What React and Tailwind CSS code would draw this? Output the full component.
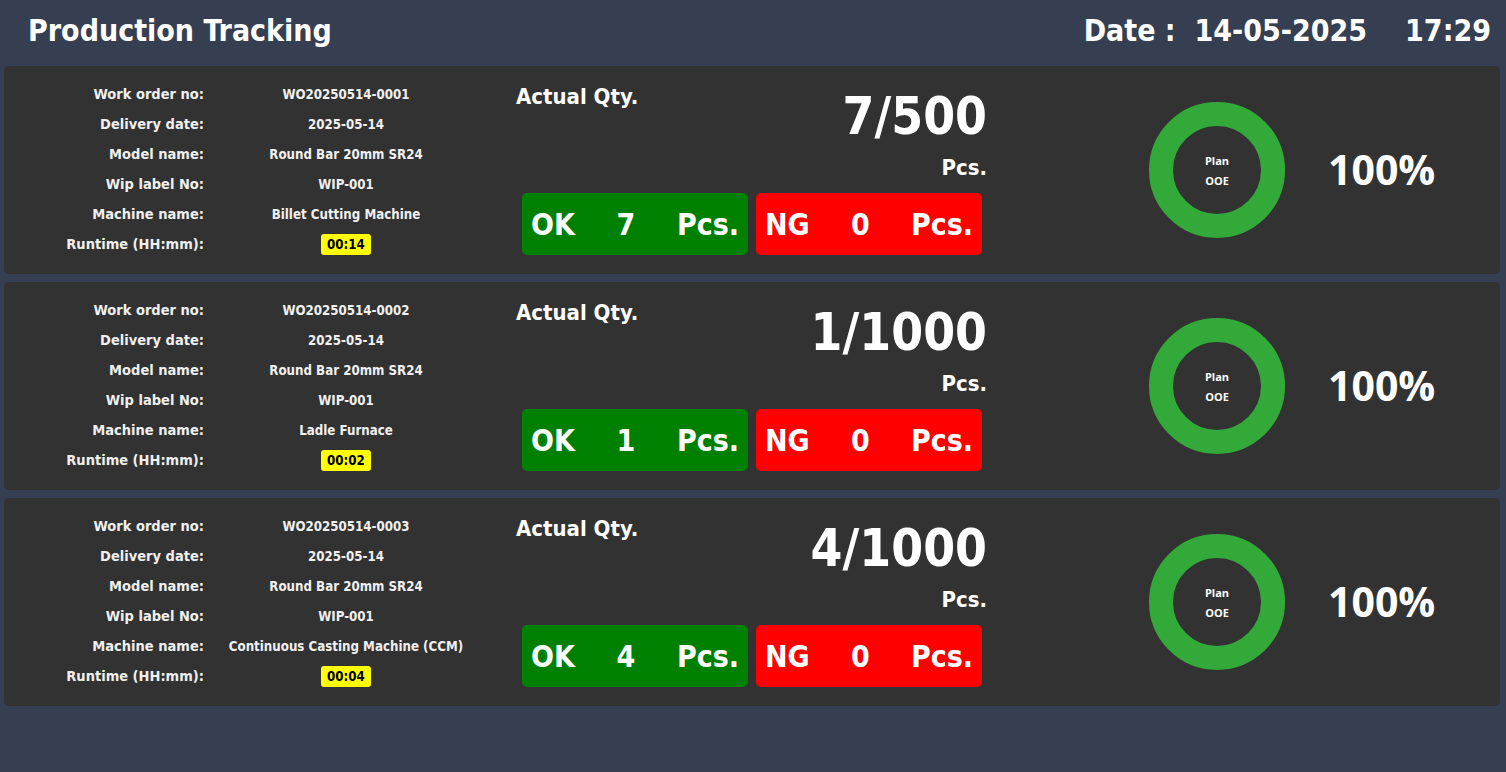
import React from 'react';

const orders = [
    { wo: 'WO20250514-0001', date: '2025-05-14', model: 'Round Bar 20mm SR24', wip: 'WIP-001', machine: 'Billet Cutting Machine', runtime: '00:14', actual: 7, plan: 500, ok: 7, ng: 0 },
    { wo: 'WO20250514-0002', date: '2025-05-14', model: 'Round Bar 20mm SR24', wip: 'WIP-001', machine: 'Ladle Furnace', runtime: '00:02', actual: 1, plan: 1000, ok: 1, ng: 0 },
    { wo: 'WO20250514-0003', date: '2025-05-14', model: 'Round Bar 20mm SR24', wip: 'WIP-001', machine: 'Continuous Casting Machine (CCM)', runtime: '00:04', actual: 4, plan: 1000, ok: 4, ng: 0 },
];

const tahoma = "font-['DejaVu_Sans',sans-serif] font-stretch-condensed";
const segoe = "font-['Open_Sans',sans-serif] font-stretch-normal";

const InfoRow = ({ label, children }) => (
    <div className="grid grid-cols-[200px_284px] h-[30px] leading-[30px] items-baseline">
        <div className="text-right text-[14.5px] font-bold text-[#f0f0f0]">{label}</div>
        <div className="text-center text-[13.2px] font-bold text-[#f0f0f0]">{children}</div>
    </div>
);

const Donut = () => (
    <div className="relative w-[136px] h-[136px] shrink-0">
        <svg width="136" height="136" viewBox="0 0 136 136">
            <circle cx="68" cy="68" r="56" fill="none" stroke="#33a93a" strokeWidth="24" />
        </svg>
        <div className={`absolute inset-0 flex flex-col items-center justify-center gap-[9px] text-white text-[11px] font-bold leading-none ${segoe}`}>
            <span>Plan</span>
            <span>OOE</span>
        </div>
    </div>
);

const OrderCard = ({ o }) => (
    <div className="h-[208px] rounded-[5px] bg-[#323232] flex">
        {/* info */}
        <div className="w-[512px] shrink-0 pt-[13px]">
            <InfoRow label="Work order no:">{o.wo}</InfoRow>
            <InfoRow label="Delivery date:">{o.date}</InfoRow>
            <InfoRow label="Model name:">{o.model}</InfoRow>
            <InfoRow label="Wip label No:">{o.wip}</InfoRow>
            <InfoRow label="Machine name:">{o.machine}</InfoRow>
            <InfoRow label="Runtime (HH:mm):">
                <span className="inline-block bg-[#ffff00] text-black rounded-[3px] px-[6px] leading-[21px]">{o.runtime}</span>
            </InfoRow>
        </div>

        {/* quantity */}
        <div className="w-[471px] shrink-0 pt-[19px] flex flex-col text-white font-bold">
            <div className="flex justify-between items-start">
                <span className="text-[22px] leading-[24px]">Actual Qty.</span>
                <span className="mt-[2px] text-[51px] leading-[60px]">{o.actual}/{o.plan}</span>
            </div>
            <div className="mt-[9px] text-right text-[22px] leading-[24px]">Pcs.</div>
            <div className="mt-[13px] pl-[6px] pr-[5px] flex gap-[8px]">
                <div className="flex-1 h-[62px] rounded-[5px] bg-[#008000] px-[9px] flex items-center justify-between text-[30px]">
                    <span>OK</span><span>{o.ok}</span><span>Pcs.</span>
                </div>
                <div className="flex-1 h-[62px] rounded-[5px] bg-[#ff0000] px-[9px] flex items-center justify-between text-[30px]">
                    <span>NG</span><span>{o.ng}</span><span>Pcs.</span>
                </div>
            </div>
        </div>

        {/* ooe */}
        <div className="ml-[162px] flex items-center">
            <Donut />
            <span className={`ml-[43px] text-white text-[41px] font-bold ${segoe}`}>100%</span>
        </div>
    </div>
);

export default function App() {
    return (
        <div className={`min-h-screen bg-[#353f51] ${tahoma}`}>
            {/* Header */}
            <div className="h-[60px] pl-[28px] pr-[15px] flex items-center justify-between text-white font-bold text-[30px]">
                <h1>Production Tracking</h1>
                <div className="flex gap-[38px]">
                    <span>Date :&nbsp; 14-05-2025</span>
                    <span>17:29</span>
                </div>
            </div>

            {/* Cards */}
            <div className="pt-[6px] pl-[4px] pr-[6px] flex flex-col gap-[8px]">
                {orders.map((o) => (
                    <OrderCard key={o.wo} o={o} />
                ))}
            </div>
        </div>
    );
}
